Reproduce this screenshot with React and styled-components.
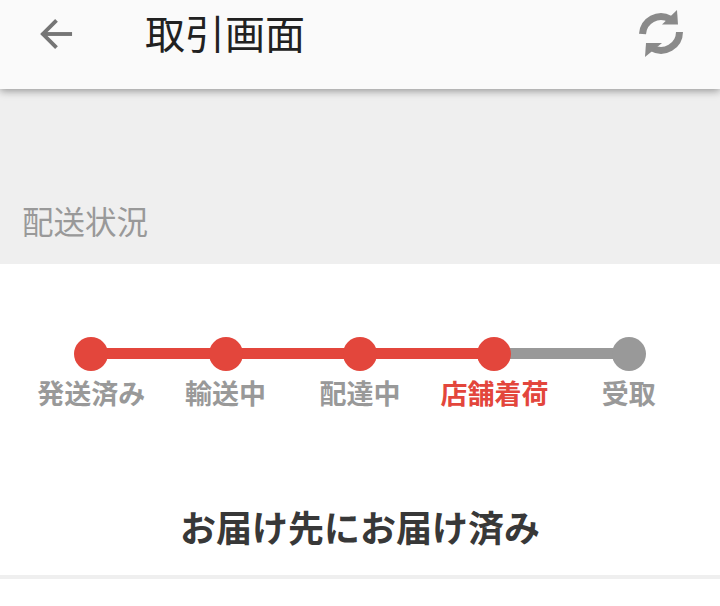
import styled, { createGlobalStyle } from 'styled-components'

const GlobalStyle = createGlobalStyle`
  html, body {
    margin: 0;
    padding: 0;
    background: #ffffff;
  }
  * {
    box-sizing: border-box;
  }
`

const Page = styled.div`
  width: 720px;
  height: 606px;
  overflow: hidden;
  display: flex;
  flex-direction: column;
  font-family: "Noto Sans CJK JP", "Noto Sans", sans-serif;
`

const Header = styled.header`
  position: relative;
  z-index: 1;
  height: 89px;
  flex: 0 0 auto;
  display: flex;
  align-items: flex-start;
  padding: 10px 36px 0 38px;
  background-color: #fafafa;
  box-shadow: 0 2px 8px rgba(0, 0, 0, 0.38);
`

const BackButton = styled.button`
  width: 36px;
  height: 48px;
  padding: 0 0 0 1px;
  border: 0;
  background: none;
  display: flex;
  align-items: center;
  color: #757575;
`

const HeaderTitle = styled.h1`
  margin: -2px 0 0 71px;
  flex: 1;
  font-size: 40px;
  line-height: 48px;
  font-weight: 400;
  color: #212121;
`

const SyncButton = styled.button`
  width: 46px;
  height: 48px;
  padding: 0;
  border: 0;
  background: none;
  color: #8a8a8a;
`

const SectionLabel = styled.div`
  height: 175px;
  flex: 0 0 auto;
  display: flex;
  align-items: flex-end;
  padding: 0 0 22px 22px;
  background-color: #efefef;
  font-size: 31.5px;
  line-height: 44px;
  color: #999999;
`

const Card = styled.section`
  background-color: #ffffff;
  border-bottom: 4px solid #efefef;
  height: 315px;
  flex: 0 0 auto;
  display: flex;
  flex-direction: column;
  padding-top: 72px;
`

const Steps = styled.ol`
  margin: 0;
  padding: 0 24px;
  list-style: none;
  display: grid;
  grid-template-columns: repeat(5, 1fr);
`

const Step = styled.li`
  position: relative;
  display: flex;
  flex-direction: column;
  align-items: center;
  gap: 2px;

  /* connector to the previous dot */
  &:not(:first-child)::before {
    content: '';
    position: absolute;
    top: 12px;
    right: 50%;
    width: 100%;
    height: 11px;
    background-color: ${p => (p.$done ? '#e3463c' : '#999999')};
  }
`

const Dot = styled.span`
  position: relative;
  z-index: ${p => (p.$done ? 1 : 0)};
  width: 34px;
  height: 34px;
  margin-top: 1px;
  border-radius: 50%;
  background-color: ${p => (p.$done ? '#e3463c' : '#999999')};
`

const StepName = styled.span`
  font-size: 27px;
  line-height: 39px;
  font-weight: 700;
  white-space: nowrap;
  color: ${p => (p.$current ? '#e3463c' : '#999999')};
`

const StatusText = styled.p`
  margin: 88px 0 0;
  text-align: center;
  font-size: 36px;
  line-height: 52px;
  font-weight: 700;
  color: #383838;
`

const stepList = ['発送済み', '輸送中', '配達中', '店舗着荷', '受取']
const currentStep = 3

const App = () => {
  return (
    <Page>
      <GlobalStyle />
      <Header>
        <BackButton aria-label="戻る">
          <svg width="36" height="36" viewBox="0 0 36 36" fill="none" stroke="currentColor" strokeWidth="4">
            <path d="M3 18H34" />
            <path d="M18 4L4 18L18 32" />
          </svg>
        </BackButton>
        <HeaderTitle>取引画面</HeaderTitle>
        <SyncButton aria-label="更新">
          <svg width="46" height="48" viewBox="0 0 46 48" fill="currentColor">
            <path d="M4.5 24A18.5 18.5 0 0 1 32 9" fill="none" stroke="currentColor" strokeWidth="7" />
            <path d="M39 0L40 14.5H24Z" />
            <path d="M41.5 22A18.5 18.5 0 0 1 14 38" fill="none" stroke="currentColor" strokeWidth="7" />
            <path d="M7 47L8 33H24Z" />
          </svg>
        </SyncButton>
      </Header>
      <SectionLabel>配送状況</SectionLabel>
      <Card>
        <Steps>
          {stepList.map((name, i) => {
            return (
              <Step key={name} $done={i <= currentStep}>
                <Dot $done={i <= currentStep} />
                <StepName $current={i === currentStep}>{name}</StepName>
              </Step>
            )
          })}
        </Steps>
        <StatusText>お届け先にお届け済み</StatusText>
      </Card>
    </Page>
  )
}

export default App
